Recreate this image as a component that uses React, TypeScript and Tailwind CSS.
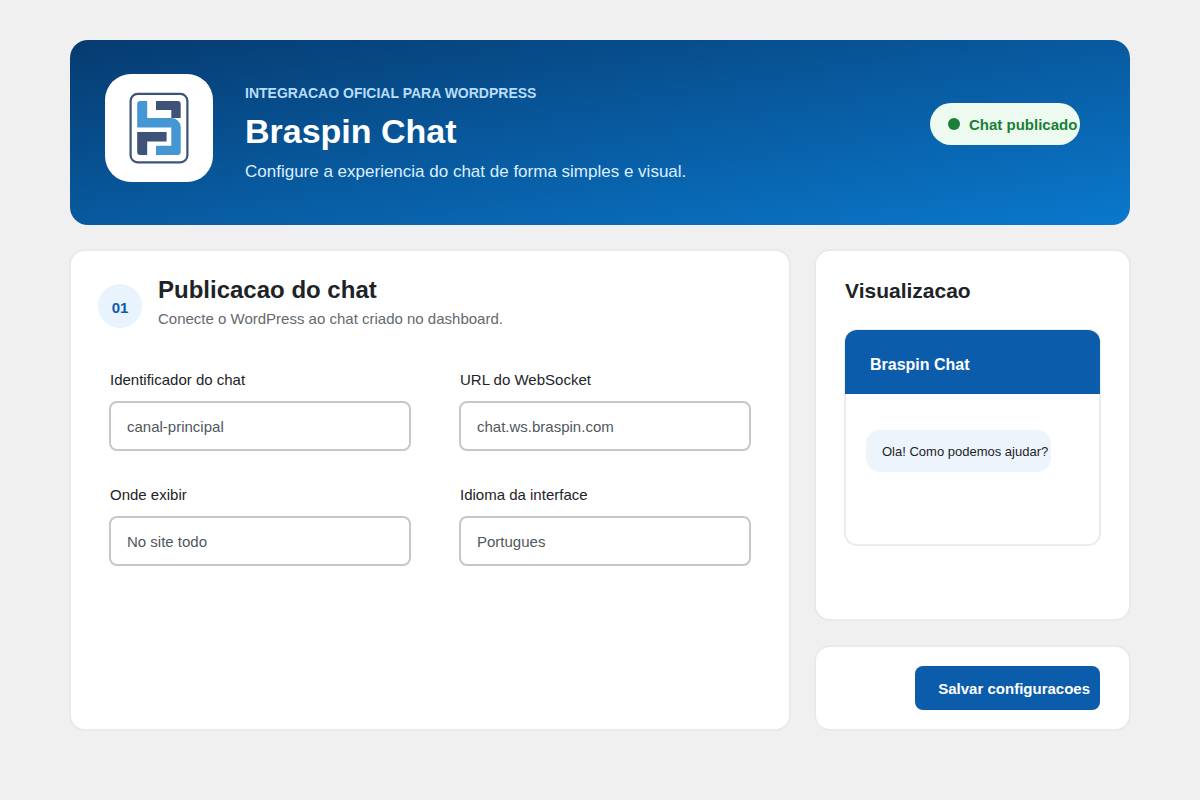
import React from 'react';

const BraspinLogo: React.FC = () => (
  <svg width="60" height="72" viewBox="0 0 60 72" fill="none" aria-hidden="true">
    <rect x="1.6" y="1.9" width="56.8" height="68.4" rx="7" stroke="#3f5379" strokeWidth="2.2" />
    <path d="M27 9h21.7a3 3 0 0 1 3 3v14h-9.4v-8H27z" fill="#3f5379" />
    <path
      d="M8.2 12a3 3 0 0 1 3-3h7v17h24.5a9 9 0 0 1 9 9v25a3 3 0 0 1-3 3H27v-9.2h15.3V35.4H8.2z"
      fill="#4497d2"
    />
    <path d="M8.2 40h29.4v9.4H18.2V63h-7a3 3 0 0 1-3-3z" fill="#3f5379" />
  </svg>
);

const fields = [
  { id: 'chat-id', label: 'Identificador do chat', value: 'canal-principal', type: 'text' },
  { id: 'ws-url', label: 'URL do WebSocket', value: 'chat.ws.braspin.com', type: 'text' },
  { id: 'placement', label: 'Onde exibir', value: 'No site todo', type: 'select' },
  { id: 'language', label: 'Idioma da interface', value: 'Portugues', type: 'select' },
];

const controlClass =
  'mt-[11px] h-[50px] w-full appearance-none rounded-lg border-2 border-[#c6c7c9] bg-white px-4 text-[15px] text-[#50575e]';

const cardClass = 'rounded-2xl border-2 border-[#eaeaeb] bg-white';

const App: React.FC = () => {
  return (
    <div className="min-h-screen bg-[#f0f0f1] px-[69px] py-10 font-['Liberation_Sans',Arial,sans-serif] text-[#1d2327]">
      <header className="mx-px flex items-start rounded-[18px] bg-linear-to-br/srgb from-[#063b70] via-[#085a9f] to-[#0a78cc] pt-[34px] pr-[50px] pb-[41px] pl-[35px]">
        <div className="flex size-[108px] shrink-0 items-center justify-center rounded-[26px] bg-white">
          <BraspinLogo />
        </div>
        <div className="mt-[9px] ml-8 flex-1">
          <p className="text-[14px] leading-5 font-bold text-[#b9dcfa]">INTEGRACAO OFICIAL PARA WORDPRESS</p>
          <h1 className="mt-2 text-[34px] leading-10 font-bold text-white">Braspin Chat</h1>
          <p className="mt-[9px] text-[17px] leading-6 text-[#dceeff]">
            Configure a experiencia do chat de forma simples e visual.
          </p>
        </div>
        <div className="mt-[29px] flex h-[42px] w-[150px] shrink-0 items-center gap-[9px] rounded-full bg-[#edfaef] pl-[18px]">
          <span className="size-3 shrink-0 rounded-full bg-[#1a7f37]" />
          <span className="pt-0.5 text-[15px] leading-5 font-bold whitespace-nowrap text-[#1a7f37]">
            Chat publicado
          </span>
        </div>
      </header>

      <main className="mt-6 grid grid-cols-[1fr_317px] gap-[23px]">
        <section className={`${cardClass} pt-[25px] pb-10`}>
          <div className="flex gap-4 px-[27px]">
            <span className="mt-2 flex size-11 shrink-0 items-center justify-center rounded-full bg-[#e8f3fd] pt-1 text-[15px] leading-5 font-bold text-[#0b5cab]">
              01
            </span>
            <div>
              <h2 className="text-[24px] leading-7 font-bold">Publicacao do chat</h2>
              <p className="mt-[5px] text-[15px] leading-5 text-[#646970]">
                Conecte o WordPress ao chat criado no dashboard.
              </p>
            </div>
          </div>

          <form className="mt-[41px] grid grid-cols-[302fr_292fr] gap-x-12 gap-y-[34px] px-[38px]">
            {fields.map((field) => (
              <div key={field.id}>
                <label htmlFor={field.id} className="block pl-px text-[15px] leading-5">
                  {field.label}
                </label>
                {field.type === 'select' ? (
                  <select id={field.id} defaultValue={field.value} className={`${controlClass} pt-0.5`}>
                    <option>{field.value}</option>
                  </select>
                ) : (
                  <input id={field.id} type="text" defaultValue={field.value} className={controlClass} />
                )}
              </div>
            ))}
          </form>
        </section>

        <div className="flex flex-col gap-6">
          <section className={`${cardClass} px-7 pt-7 pb-[73px]`}>
            <h2 className="pl-px text-[21px] leading-6 font-bold">Visualizacao</h2>
            <div className="mt-[26px] rounded-[13px] border-2 border-[#ececed] bg-white">
              <div className="-mx-px -mt-px rounded-t-xl bg-[#0b5cab] pt-[25px] pb-[19px] pl-[25px]">
                <h3 className="text-[16px] leading-5 font-bold text-white">Braspin Chat</h3>
              </div>
              <div className="px-5 pt-9 pb-[72px]">
                <p className="w-fit rounded-[14px] bg-[#edf4fc] pt-3 pr-[3px] pb-2.5 pl-4 text-[13px] leading-5">
                  Ola! Como podemos ajudar?
                </p>
              </div>
            </div>
          </section>

          <section className={`${cardClass} flex justify-end px-[29px] py-[19px]`}>
            <button
              type="button"
              className="h-11 rounded-lg bg-[#0b5cab] pt-0.5 pr-2.5 pl-[23px] text-[15px] leading-5 font-bold text-white"
            >
              Salvar configuracoes
            </button>
          </section>
        </div>
      </main>
    </div>
  );
};

export default App;
